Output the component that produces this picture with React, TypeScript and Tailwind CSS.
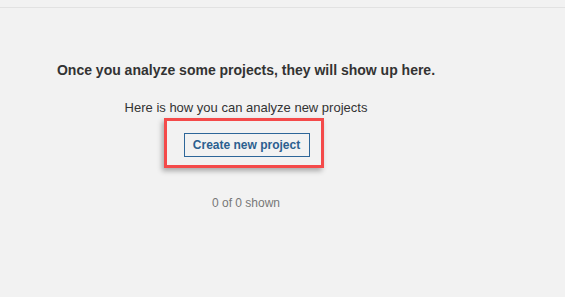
export default function App() {
  return (
    <div className="h-[297px] w-[565px] overflow-hidden bg-[#f2f2f2] font-['Liberation_Sans',Arial,sans-serif]">
      {/* top rule */}
      <div className="h-[8px] border-b border-[#e2e2e2]" />

      <div className="flex w-[492px] flex-col items-center">
        <h2 className="mt-[54px] text-[14px] leading-[16px] font-bold text-[#333]">
          Once you analyze some projects, they will show up here.
        </h2>
        <p className="mt-[22px] text-[13px] leading-[15px] text-[#333]">
          Here is how you can analyze new projects
        </p>

        <div className="relative mt-[17px]">
          <button className="ml-[1px] h-[24px] w-[126px] border border-[#2d6699] text-[12px] font-bold text-[#2b5f8f]">
            Create new project
          </button>
          {/* highlight annotation */}
          <div className="pointer-events-none absolute top-[-14px] left-[-19px] h-[50px] w-[160px] border-[3px] border-[#f44a4a] shadow-[-2px_3px_5px_rgba(0,0,0,0.3)]" />
        </div>

        <p className="mt-[39px] text-[12px] leading-[14px] text-[#777]">0 of 0 shown</p>
      </div>
    </div>
  )
}
